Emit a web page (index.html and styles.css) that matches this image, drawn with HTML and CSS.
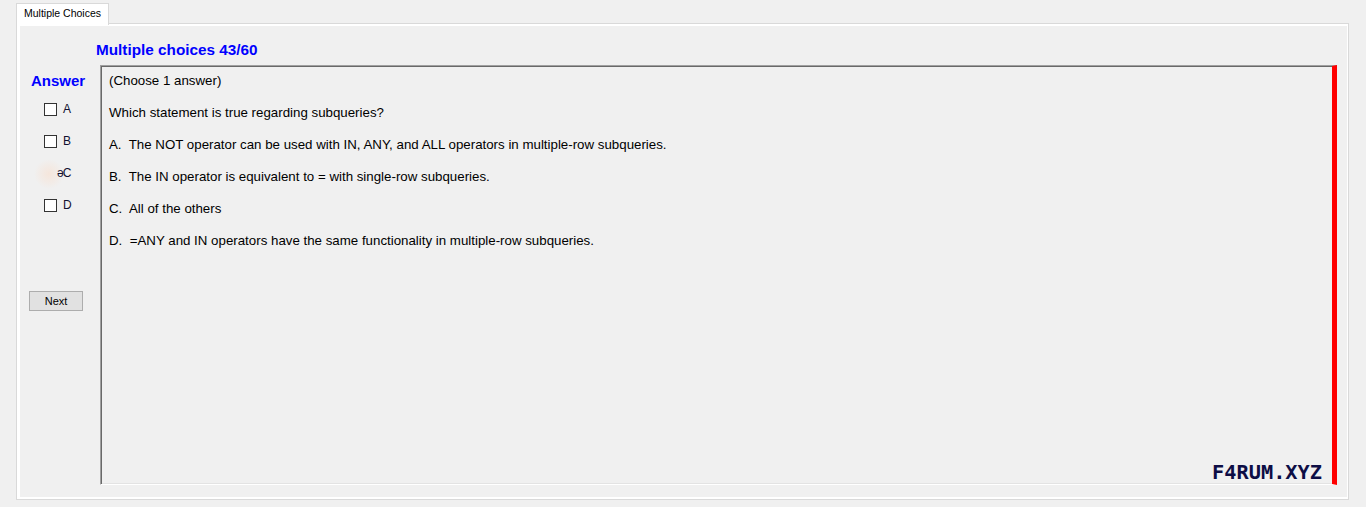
FILE: index.html
```html
<!DOCTYPE html>
<html>
<head>
<meta charset="utf-8">
<link rel="stylesheet" href="styles.css">
</head>
<body>
<div class="tabs">
  <div class="tab">Multiple Choices</div>
</div>
<div class="panel">
  <div class="page">
    <div class="title">Multiple choices 43/60</div>
    <div class="main">
      <div class="side">
        <div class="answer">Answer</div>
        <div class="opt"><span class="box"></span><span class="lbl">A</span></div>
        <div class="opt"><span class="box"></span><span class="lbl">B</span></div>
        <div class="opt"><span class="glow"></span><span class="lbl lbl-c">əC</span></div>
        <div class="opt"><span class="box"></span><span class="lbl">D</span></div>
        <button class="next">Next</button>
      </div>
      <div class="qbox">
        <p>(Choose 1 answer)</p>
        <p>Which statement is true regarding subqueries?</p>
        <p>A.&nbsp; The NOT operator can be used with IN, ANY, and ALL operators in multiple-row subqueries.</p>
        <p>B.&nbsp; The IN operator is equivalent to = with single-row subqueries.</p>
        <p>C.&nbsp; All of the others</p>
        <p>D.&nbsp; =ANY and IN operators have the same functionality in multiple-row subqueries.</p>
        <div class="mark">F4RUM.XYZ</div>
      </div>
    </div>
  </div>
</div>
</body>
</html>
```
FILE: styles.css
```css
html, body {
  margin: 0;
  padding: 0;
  background: #f0f0f0;
}
body {
  padding-top: 3px;
  font-family: "Liberation Sans", Arial, sans-serif;
  color: #000;
}
.tabs {
  display: flex;
  padding-left: 16px;
  height: 21px;
  position: relative;
  z-index: 2;
  margin-bottom: -1px;
}
.tab {
  box-sizing: border-box;
  width: 93px;
  height: 22px;
  background: #fff;
  border: 1px solid #d9d9d9;
  border-bottom: none;
  font-size: 10.5px;
  line-height: 19px;
  padding-left: 7px;
}
.panel {
  box-sizing: border-box;
  margin-left: 16px;
  width: 1333px;
  height: 477px;
  border: 1px solid #d9d9d9;
  background: #fff;
  padding: 2px 1px 2px 3px;
}
.page {
  height: 100%;
  background: #f0f0f0;
  display: flex;
  flex-direction: column;
}
.title {
  margin-top: 16px;
  padding-left: 76px;
  font-weight: bold;
  font-size: 15.3px;
  line-height: 16px;
  color: #0000ff;
}
.main {
  margin-top: 7px;
  display: flex;
}
.side {
  width: 80px;
  display: flex;
  flex-direction: column;
}
.answer {
  margin-top: 8px;
  padding-left: 11px;
  font-weight: bold;
  font-size: 15px;
  line-height: 16px;
  color: #0000ff;
}
.opt {
  height: 32px;
  display: flex;
  align-items: center;
  padding-left: 24px;
  font-size: 12px;
}
.answer + .opt { margin-top: 4px; }
.box {
  box-sizing: border-box;
  width: 13px;
  height: 13px;
  border: 1px solid #333;
  background: #fff;
  margin-right: 6px;
}
.glow {
  width: 13px;
  height: 13px;
  position: relative;
}
.glow::before {
  content: "";
  position: absolute;
  left: -10px;
  top: -8px;
  width: 30px;
  height: 30px;
  border-radius: 50%;
  background: radial-gradient(circle, rgba(246,228,216,0.85) 0%, rgba(244,232,224,0.5) 45%, rgba(240,240,240,0) 70%);
}
.lbl {
  color: #101030;
  position: relative;
}
.lbl-c {
  letter-spacing: -1px;
}
.next {
  margin-top: 70px;
  margin-left: 9px;
  width: 54px;
  height: 20px;
  background: #e1e1e1;
  border: 1px solid #adadad;
  border-radius: 0;
  font-family: "Liberation Sans", Arial, sans-serif;
  font-size: 11px;
  color: #000;
  padding: 0;
}
.qbox {
  box-sizing: border-box;
  width: 1237px;
  height: 420px;
  border-top: 1px solid #a0a0a0;
  border-left: 1px solid #a0a0a0;
  border-bottom: 1px solid #ffffff;
  border-right: 5px solid #ff0000;
  box-shadow: inset 1px 1px 0 #696969, inset 0 -1px 0 #e3e3e3;
  padding: 7px 10px 1px 8px;
  display: flex;
  flex-direction: column;
  font-size: 13.3px;
}
.qbox p {
  margin: 0 0 16px 0;
  line-height: 16px;
}
.mark {
  margin-top: auto;
  align-self: flex-end;
  font-family: "DejaVu Sans Mono", monospace;
  font-weight: bold;
  font-size: 20.3px;
  line-height: 22px;
  color: #0d0d45;
}
```
